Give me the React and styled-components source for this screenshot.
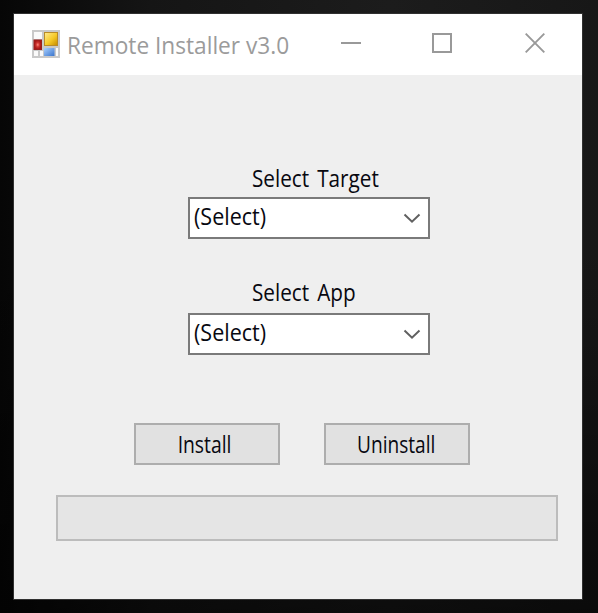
import React from 'react';
import styled, { createGlobalStyle } from 'styled-components';

const GlobalStyle = createGlobalStyle`
  * { box-sizing: border-box; }
  body { margin: 0; background: #080808; }
`;

const Desktop = styled.main`
  width: 598px;
  height: 613px;
  padding: 13px 0 0 13px;
  overflow: hidden;
  background:
    linear-gradient(to bottom, transparent 0 40%, rgba(0, 0, 0, 0.55) 100%),
    linear-gradient(to right, #060606 0, #151515 25%, #1c1c1c 65%, #171717 100%);
`;

const Window = styled.section`
  width: 570px;
  height: 587px;
  border: 1px solid #303030;
  background: #efefef;
  font-family: 'Open Sans', 'Noto Sans', sans-serif;
`;

const TitleBar = styled.header`
  display: flex;
  align-items: center;
  height: 61px;
  padding-left: 18px;
  background: #fff;
`;

const AppIcon = styled.svg`
  flex: none;
  margin-bottom: 1px;
`;

const Title = styled.h1`
  width: 234px;
  margin: 1px 0 0 7px;
  font-size: 23px;
  font-weight: 400;
  line-height: 32px;
  color: #9b9b9b;
  white-space: nowrap;
  transform: scaleX(0.985);
  transform-origin: left;
`;

const Controls = styled.div`
  display: flex;
  height: 60px;
  margin: 0 0 3px auto;
`;

const ControlButton = styled.button`
  display: grid;
  place-items: center;
  width: ${({ $width }) => $width}px;
  padding: 0;
  border: 0;
  background: transparent;
`;

const Form = styled.form`
  display: flex;
  flex-direction: column;
`;

const Field = styled.div`
  display: flex;
  flex-direction: column;
  width: 242px;
  margin: ${({ $top }) => $top}px 0 0 174px;
`;

const Label = styled.label`
  height: 32px;
  margin: 0 0 ${({ $gap }) => $gap}px 64px;
  font-size: 23px;
  line-height: 32px;
  word-spacing: 3px;
  color: #080810;
  white-space: nowrap;
  transform: scaleX(0.9);
  transform-origin: left;
`;

const Combo = styled.div`
  display: flex;
  align-items: center;
  justify-content: space-between;
  height: 42px;
  padding: 0 7px 0 4px;
  border: 2px solid #7a7a7a;
  background: #fff;
`;

const ComboText = styled.span`
  margin-top: -5px;
  font-size: 23px;
  line-height: 32px;
  color: #080810;
  transform: scaleX(0.935);
  transform-origin: left;
`;

const Actions = styled.div`
  display: flex;
  gap: 44px;
  margin: 68px 0 0 120px;
`;

const ActionButton = styled.button`
  display: flex;
  align-items: center;
  justify-content: center;
  width: 146px;
  height: 42px;
  padding: 0;
  border: 2px solid #adadad;
  background: #e1e1e1;
  font: inherit;
  font-size: 23px;
  color: #080810;
`;

const ActionText = styled.span`
  transform: translateX(${({ $shift }) => $shift}px) scaleX(${({ $scale }) => $scale});
`;

const Progress = styled.div`
  width: 502px;
  height: 46px;
  margin: 30px 0 0 42px;
  border: 2px solid #bcbcbc;
  background: #e5e5e5;
`;

function FormIcon() {
  return (
    <AppIcon width="28" height="28" viewBox="0 0 28 28" aria-hidden="true">
      <defs>
        <linearGradient id="gold" x1="0" y1="0" x2="1" y2="1">
          <stop offset="0" stopColor="#ffe98a" />
          <stop offset=".55" stopColor="#f5c928" />
          <stop offset="1" stopColor="#c99000" />
        </linearGradient>
        <radialGradient id="red">
          <stop offset="0" stopColor="#ff8b80" />
          <stop offset=".5" stopColor="#cf3530" />
          <stop offset="1" stopColor="#a81818" />
        </radialGradient>
        <linearGradient id="blue" x1="0" y1="0" x2="1" y2="1">
          <stop offset="0" stopColor="#a9d0ff" />
          <stop offset="1" stopColor="#3974cc" />
        </linearGradient>
      </defs>
      <rect width="28" height="28" fill="#c9c9c9" />
      <path d="M2 2h8v7H2zM2 21h4v5H2zM8 21h3v5H8zM24 18h2v8h-2z" fill="#fafafa" />
      <rect x="12" y="2" width="14" height="14" fill="#b98b28" />
      <rect x="13" y="3" width="12" height="12" fill="url(#gold)" />
      <rect x="1.5" y="9.5" width="8.5" height="10.5" fill="#98201e" />
      <rect x="2.5" y="10.5" width="6.5" height="8.5" fill="url(#red)" />
      <rect x="12" y="18" width="10.5" height="8" fill="url(#blue)" />
    </AppIcon>
  );
}

function Chevron() {
  return (
    <svg width="18" height="12" viewBox="0 0 18 12" fill="none" aria-hidden="true">
      <path d="M1.5 2.5L9 9.7 16.5 2.5" stroke="#606060" strokeWidth="2" />
    </svg>
  );
}

function SelectField({ label, top, gap }) {
  return (
    <Field $top={top}>
      <Label $gap={gap}>{label}</Label>
      <Combo role="combobox" aria-label={label} aria-expanded="false">
        <ComboText>(Select)</ComboText>
        <Chevron />
      </Combo>
    </Field>
  );
}

export default function App() {
  return (
    <>
      <GlobalStyle />
      <Desktop>
        <Window>
          <TitleBar>
            <FormIcon />
            <Title>Remote Installer v3.0</Title>
            <Controls>
              <ControlButton $width={90} aria-label="Minimize">
                <svg width="20" height="20"><path d="M0 10H20" stroke="#999" strokeWidth="2" /></svg>
              </ControlButton>
              <ControlButton $width={92} aria-label="Maximize">
                <svg width="20" height="20"><path d="M1 1H19V19H1Z" fill="none" stroke="#999" strokeWidth="2" /></svg>
              </ControlButton>
              <ControlButton $width={94} aria-label="Close">
                <svg width="20" height="20"><path d="M.7.7L19.3 19.3M19.3.7L.7 19.3" stroke="#999" strokeWidth="1.9" /></svg>
              </ControlButton>
            </Controls>
          </TitleBar>
          <Form>
            <SelectField label="Select Target" top={87} gap={3} />
            <SelectField label="Select App" top={37} gap={5} />
            <Actions>
              <ActionButton type="button"><ActionText $shift={-2.5} $scale={0.84}>Install</ActionText></ActionButton>
              <ActionButton type="button"><ActionText $shift={-1} $scale={0.83}>Uninstall</ActionText></ActionButton>
            </Actions>
            <Progress role="progressbar" aria-valuenow={0} />
          </Form>
        </Window>
      </Desktop>
    </>
  );
}
